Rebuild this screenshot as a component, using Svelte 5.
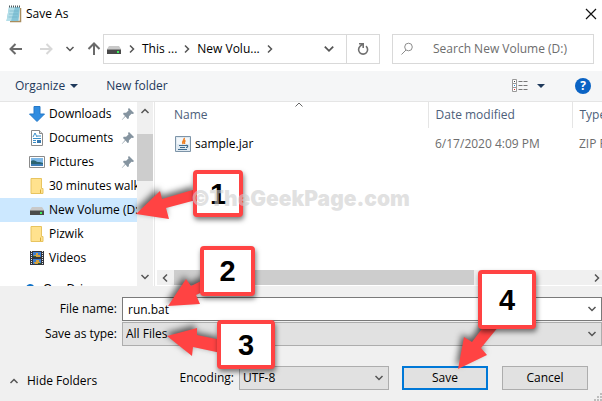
<script>
  let fileName = $state('run.bat');
  let fileType = $state('All Files');
  let encoding = $state('UTF-8');
  let query = $state('');

  const places = [
    { name: 'Downloads', icon: 'download', pinned: true },
    { name: 'Documents', icon: 'document', pinned: true },
    { name: 'Pictures', icon: 'picture', pinned: true },
    { name: '30 minutes walk', icon: 'folder' },
    { name: 'New Volume (D:)', icon: 'drive', selected: true },
    { name: 'Pizwik', icon: 'folder' },
    { name: 'Videos', icon: 'video' }
  ];
  const files = [{ name: 'sample.jar', date: '6/17/2020 4:09 PM', type: 'ZIP File' }];
</script>

{#snippet chevron(dir)}
  <svg class="chev {dir}" width="10" height="10" viewBox="0 0 10 10" aria-hidden="true">
    <path d="M1.5 3 5 6.5 8.5 3" />
  </svg>
{/snippet}

{#snippet icon(kind)}
  <svg width="16" height="16" viewBox="0 0 16 16" aria-hidden="true">
    {#if kind === 'download'}
      <path d="M5 .5h6V8h4.5L8 15.5.5 8H5z" fill="#2f8ce0" stroke="#2478c8" />
    {:else if kind === 'document'}
      <path d="M2.5.5h8l3 3v12h-11z" fill="#fff" stroke="#8a8a8a" />
      <path d="M10.5.5v3h3" fill="#ddd" stroke="#8a8a8a" />
      <path d="M4 7 6 3l2 4M8 6h4M4 8.5h8M4 10.5h3M4 12.5h3" fill="none" stroke="#3c8fc8" />
      <path d="M8 10h4v3H8z" fill="#3778ae" />
    {:else if kind === 'picture'}
      <path d="M.5 2.5h15v11H.5z" fill="#fff" stroke="#8a8a8a" />
      <path d="M2 4h12v8H2z" fill="#7fb8e6" />
      <path d="M2 7c3-2 5 1 7 1s3 0 5 1v3H2z" fill="#2c6470" />
      <path d="M2 10h12v2H2z" fill="#3f7db5" />
    {:else if kind === 'folder'}
      <path d="M2 .5h10.5v10H14v5H2z" fill="#ffe28e" stroke="#e8c45f" />
      <path d="M11.5 11.5v3.5" stroke="#d9ae3c" />
    {:else if kind === 'drive'}
      <path d="M3 5h10l2 3H1z" fill="#c9c9c9" />
      <path d="M1 8h14v5H1z" fill="#4a4a4a" />
      <path d="M1 8h14v1H1z" fill="#8d8d8d" />
      <path d="M11 10h2v2h-2z" fill="#3df05c" />
    {:else if kind === 'video'}
      <path d="M1 1h14v14H1z" fill="#33363d" />
      <path d="M2.5 1v14M13.5 1v14" stroke="#e8e8e8" stroke-dasharray="1 1" />
      <path d="M4 2h8v5H4zM4 9h8v5H4z" fill="#3f7fd0" />
      <path d="M5 5h2V3h2v2h2v2H6zM5 12h2v-2h3v2h1v2H6z" fill="#d8a23a" />
      <path d="M4 6h3v1H4zM9 13h3v1H9z" fill="#2c5d2f" />
    {:else if kind === 'jar'}
      <path d="M.5.5h15v15H.5z" fill="#dfe9f1" stroke="#7d94a8" />
      <path d="M2 2h12v6H2z" fill="#f3f7fa" />
      <path d="M9 2c1.5 2-3 3-1 6M10.5 4.5c-2 1-1 2-1 3.5" fill="none" stroke="#ee7f22" stroke-width="1.6" />
      <path d="M4 9.5h7M5 11.5h5M3 13.5h9M11 9.5c2.5-.5 2 2 0 2" fill="none" stroke="#3f6b8e" stroke-width="1.2" />
    {:else if kind === 'pin'}
      <path d="M9 2 14 7l-1 1-1.5-.3L9 10.2l-.2 2.3L7.5 13 5.5 10.5 2 14l-.2-.2L5 10 3 8l.7-1.2 2.4-.1L8.5 4.5 8 3z" fill="#8594a0" />
    {:else if kind === 'cloud'}
      <path d="M3 12a3 3 0 0 1 0-6 4.5 4.5 0 0 1 8-1 4 4 0 0 1 2 7z" fill="#1273c8" />
    {/if}
  </svg>
{/snippet}

<main class="dialog">
  <header class="title">
    <svg width="16" height="18" viewBox="0 0 16 18" aria-hidden="true">
      <path d="M14.5 3v13.5H4" fill="none" stroke="#a98d5e" stroke-width="1.5" />
      <path d="M3 2h11l-1.5 14H.5z" fill="#86c5d8" />
      <path d="M3 2h6L5 16H.5z" fill="#b4dfe9" />
      <path d="M3.5 6h9M3 9h9M2.5 12h9" stroke="#6bb0c6" stroke-width=".6" />
      <path d="M3 1.5h11.5" stroke="#4d5b60" stroke-width="2" stroke-dasharray="1 1" />
    </svg>
    <h1>Save As</h1>
    <button class="close" aria-label="Close">
      <svg width="12" height="12" viewBox="0 0 12 12"><path d="m1 1 10 10M11 1 1 11" stroke="#111" stroke-width="1.2" /></svg>
    </button>
  </header>

  <nav class="nav" aria-label="Location">
    <div class="history">
      <button aria-label="Back"><svg width="14" height="12" viewBox="0 0 14 12"><path d="M6.5 1 1.5 6l5 5M1.5 6H13" stroke="#6a6a6a" /></svg></button>
      <button aria-label="Forward"><svg width="14" height="12" viewBox="0 0 14 12"><path d="m7.5 1 5 5-5 5M12.5 6H1" stroke="#d8d8d8" /></svg></button>
      <button aria-label="Recent locations" class="recent">{@render chevron('down')}</button>
      <button aria-label="Up"><svg width="14" height="14" viewBox="0 0 14 14"><path d="M1.5 7 7 1.5 12.5 7M7 1.5V13" stroke="#6a6a6a" /></svg></button>
    </div>
    <div class="address">
      <span class="crumb-icon">{@render icon('drive')}</span>
      {@render chevron('right')}
      <a href="#pc">This ...</a>
      {@render chevron('right')}
      <a href="#volume">New Volu...</a>
      {@render chevron('right')}
      <button class="drop" aria-label="Previous locations">{@render chevron('down')}</button>
      <button class="refresh" aria-label="Refresh">
        <svg width="14" height="14" viewBox="0 0 14 14"><path d="M10 4.2A4.5 4.5 0 1 1 4.2 4.2L6.5 2.2M3 1.8h4.2V6" stroke="#707070" stroke-width="1.6" /></svg>
      </button>
    </div>
    <label class="search">
      <svg width="14" height="14" viewBox="0 0 14 14" aria-hidden="true"><circle cx="8.5" cy="5" r="3.8" stroke="#8c8c8c" /><path d="M6 8 1.5 12.5" stroke="#8c8c8c" /></svg>
      <input type="text" bind:value={query} placeholder="Search New Volume (D:)" aria-label="Search New Volume (D:)" />
    </label>
  </nav>

  <div class="toolbar">
    <button class="organize">Organize <i class="tri"></i></button>
    <button>New folder</button>
    <button class="view" aria-label="Change your view">
      <svg width="16" height="14" viewBox="0 0 16 14">
        <path d="M.5.5h4v4h-4zM.5 4.5h4v4h-4zM.5 8.5h4v4h-4z" fill="#fff" stroke="#999" />
        <path d="M6.5 2.5h4M11.5 2.5h4M6.5 6.5h4M11.5 6.5h4M6.5 10.5h4M11.5 10.5h4" stroke="#777" />
        <path d="M2 2h1v1H2z" fill="#444" /><path d="M2 6h1v1H2z" fill="#28d" /><path d="M2 10h1v1H2z" fill="#d22" />
      </svg>
      <i class="tri"></i>
    </button>
    <button class="help" aria-label="Help">?</button>
  </div>

  <div class="body">
    <aside>
      <ul>
        {#each places as p}
          <li>
            <a href="#place" class:selected={p.selected}>
              {@render icon(p.icon)}<span>{p.name}</span>
              {#if p.pinned}<b class="pin">{@render icon('pin')}</b>{/if}
            </a>
          </li>
        {/each}
        <li class="root"><a href="#cloud">{@render icon('cloud')}<span>OneDrive</span></a></li>
      </ul>
      <div class="vbar">
        {@render chevron('up')}
        <div class="vthumb"></div>
        {@render chevron('down')}
      </div>
    </aside>
    <section class="files">
      <table>
        <thead>
          <tr>
            <th class="name">Name<span class="sort"><svg width="8" height="5" viewBox="0 0 8 5"><path d="m.5 4.5 3.5-3.5 3.5 3.5" stroke="#666" /></svg></span></th>
            <th class="date">Date modified</th>
            <th>Type</th>
          </tr>
        </thead>
        <tbody>
          {#each files as f}
            <tr>
              <td><span class="file">{@render icon('jar')}{f.name}</span></td>
              <td class="dim">{f.date}</td>
              <td class="dim">{f.type}</td>
            </tr>
          {/each}
        </tbody>
      </table>
      <div class="hbar">
        {@render chevron('left')}
        <div class="track"><div class="hthumb"></div></div>
        {@render chevron('right')}
      </div>
    </section>
  </div>

  <form class="bottom" onsubmit={(e) => e.preventDefault()}>
    <div class="field">
      <label for="fname">File name:</label>
      <div class="box white">
        <input id="fname" type="text" bind:value={fileName} />
        {@render chevron('down')}
      </div>
    </div>
    <div class="field">
      <label for="ftype">Save as type:</label>
      <div class="box">
        <select id="ftype" bind:value={fileType}><option>All Files</option></select>
        {@render chevron('down')}
      </div>
    </div>
    <div class="actions">
      <button type="button" class="hide">{@render chevron('up')}Hide Folders</button>
      <label for="enc">Encoding:</label>
      <div class="box enc">
        <select id="enc" bind:value={encoding}><option>UTF-8</option></select>
        {@render chevron('down')}
      </div>
      <button class="btn primary">Save</button>
      <button type="button" class="btn">Cancel</button>
    </div>
    <svg class="grip" width="8" height="8" viewBox="0 0 8 8" aria-hidden="true">
      <path d="M6 0h2v2H6zM3 3h2v2H3zM6 3h2v2H6zM0 6h2v2H0zM3 6h2v2H3zM6 6h2v2H6z" fill="#bdbdbd" />
    </svg>
  </form>

  <svg class="arrows" width="602" height="401" viewBox="0 0 602 401" aria-hidden="true">
    <path d="m136 214 24-23 2 8 34-10v11l-30 8 3 11z" />
    <path d="m168 306 18-27 5 7 14-7v12l-9 4 4 9z" />
    <path d="m167 336 30-8v7l24 5v13l-28-6-1 9z" />
    <path d="m458 369 6-32 8 5 12-16h15l-18 22 6 7z" />
  </svg>
  <div class="callout one">1</div>
  <div class="callout two">2</div>
  <div class="callout three">3</div>
  <div class="callout four">4</div>
  <div class="mark">©TheGeekPage.com</div>
</main>

<style>
  :global(body) { margin: 0; }
  .dialog, .dialog * { box-sizing: border-box; }
  .dialog {
    position: relative;
    display: flex;
    flex-direction: column;
    height: 100vh;
    overflow: hidden;
    background: #fff;
    color: #000;
    font: 12px/16px "Open Sans", "Noto Sans", sans-serif;
  }
  svg { display: block; flex: none; }
  button, input, select { font: inherit; color: inherit; margin: 0; padding: 0; border: 0; background: none; outline: 0; }
  button { display: flex; align-items: center; justify-content: center; }
  a { color: inherit; text-decoration: none; white-space: nowrap; }
  .chev path { fill: none; stroke: #555; stroke-width: 1.5; }
  .up { transform: rotate(180deg); }
  .right { transform: rotate(-90deg); }
  .left { transform: rotate(90deg); }

  .title { display: flex; align-items: center; height: 28px; padding: 0 5px 0 6px; gap: 4px; }
  h1 { flex: 1; margin: 0; font: inherit; }

  .nav { display: flex; align-items: center; height: 43px; padding: 0 8px 1px 9px; }
  .nav svg { fill: none; stroke-width: 2; }
  .history { display: flex; align-items: center; width: 94px; gap: 16px; }
  .history .recent { width: 10px; margin: 0 -4px; }
  .address {
    display: flex;
    align-items: center;
    flex: 273;
    height: 30px;
    gap: 5px;
    border: 1px solid #d9d9d9;
    padding-left: 2px;
  }
  .address .drop { width: 24px; margin-left: auto; }
  .address .drop :global(svg) { width: 12px; height: 12px; }
  .refresh { align-self: stretch; width: 33px; border-left: 1px solid #d9d9d9; }
  .search {
    display: flex;
    align-items: center;
    flex: 193;
    gap: 19px;
    height: 30px;
    margin-left: 12px;
    padding-left: 7px;
    border: 1px solid #d9d9d9;
  }
  .search svg { stroke-width: 1; }
  .search input { flex: 1; min-width: 0; }
  .search input::placeholder { color: #6d6d6d; opacity: 1; }

  .toolbar {
    display: flex;
    align-items: center;
    height: 31px;
    padding: 0 11px 0 15px;
    background: #f5f6f7;
    border-bottom: 1px solid #e5e5e5;
    color: #1e395b;
  }
  .organize { margin-right: 28px; }
  .tri { border: 4px solid transparent; border-top-color: #1e395b; border-bottom: 0; margin-left: 5px; }
  .view { margin-left: auto; }
  .view .tri { margin-left: 9px; }
  .help {
    width: 16px;
    height: 16px;
    margin-left: 30px;
    border-radius: 50%;
    background: #0a63c4;
    color: #fff;
    font-weight: 700;
  }

  .body { display: flex; flex: 1; min-height: 0; }
  aside { display: flex; width: 155px; border-right: 1px solid #e8e8e8; }
  ul { flex: 1; min-width: 0; margin: 0; padding: 0; list-style: none; overflow: hidden; }
  li a { position: relative; display: flex; align-items: center; height: 24px; padding-left: 29px; gap: 4px; }
  li a.selected { background: #cce8ff; }
  .pin { margin-left: auto; margin-right: 1px; }
  .root { margin-top: 7px; }
  .root a { padding-left: 23px; }
  .vbar { display: flex; flex-direction: column; align-items: center; width: 16px; margin-right: 1px; padding: 4px 0; background: #f0f0f0; }
  .vbar .chev:last-child { margin-top: auto; }
  .vthumb { width: 16px; height: 47px; margin-top: 18px; background: #cdcdcd; }
  .files { display: flex; flex-direction: column; flex: 1; min-width: 0; padding-left: 2px; overflow: hidden; }
  table { width: 100%; table-layout: fixed; border-collapse: collapse; }
  th { position: relative; height: 26px; padding: 0 0 0 7px; text-align: left; font-weight: 400; color: #4c607a; white-space: nowrap; }
  th + th { border-left: 1px solid #e5e5e5; }
  th.name { padding-left: 17px; }
  th.date { width: 144px; }
  th:last-child { width: 30px; }
  .sort { position: absolute; top: 0; left: 51%; }
  .sort svg { fill: none; }
  td { height: 32px; padding: 0 0 0 7px; white-space: nowrap; overflow: hidden; }
  td:first-child { padding-left: 18px; }
  .file { display: flex; align-items: center; gap: 4px; }
  .dim { color: #6d6d6d; }
  .hbar { display: flex; align-items: center; height: 15px; margin: auto 0 1px; padding-left: 3px; background: #f0f0f0; }
  .track { flex: 1; height: 100%; margin: 0 2px 0 4px; }
  .hthumb { width: 72%; height: 100%; background: #cdcdcd; }

  .bottom { position: relative; padding: 11px 0 11px; background: #f0f0f0; }
  .field { display: flex; align-items: center; margin-bottom: 1px; }
  .field label { width: 122px; padding-right: 5px; text-align: right; }
  .box { display: flex; align-items: center; flex: 1; height: 24px; position: relative; border: 1px solid #adadad; background: #e1e1e1; }
  .box.white { background: #fff; border-color: #7a7a7a; padding-left: 2px; }
  .box input, .box select { flex: 1; min-width: 0; height: 22px; padding-left: 3px; appearance: none; }
  .box > :global(svg) { position: absolute; right: 4px; pointer-events: none; }
  .actions { display: flex; align-items: center; margin-top: 20px; padding-right: 14px; }
  .hide { gap: 8px; margin: 6px auto 0 9px; }
  .actions label { margin-right: 5px; }
  .enc { flex: none; width: 150px; margin-right: 13px; }
  .btn { width: 86px; height: 24px; border: 1px solid #adadad; background: #e1e1e1; }
  .primary { border: 2px solid #0078d7; margin-right: 14px; }
  .grip { position: absolute; right: 0; bottom: 0; }

  .arrows { position: absolute; left: 0; top: 0; fill: #ff4343; filter: drop-shadow(-2px -3px 3px rgba(0, 0, 0, .6)); pointer-events: none; }
  .callout {
    position: absolute;
    display: flex;
    align-items: center;
    justify-content: center;
    border: 4px solid #ff4343;
    border-radius: 4px;
    background: #fff;
    box-shadow: 1px 3px 5px rgba(0, 0, 0, .5);
    font: 700 29px/32px "Liberation Sans", Arial, sans-serif;
  }
  .one { left: 193px; top: 170px; width: 50px; height: 47px; }
  .two { left: 200px; top: 246px; width: 55px; height: 50px; }
  .three { left: 217px; top: 320px; width: 58px; height: 49px; }
  .four { left: 478px; top: 270px; width: 58px; height: 59px; }
  .mark { position: absolute; left: 191px; top: 187px; font: 900 21px/24px Inter, sans-serif; color: rgba(205, 205, 205, .6); pointer-events: none; }
</style>
